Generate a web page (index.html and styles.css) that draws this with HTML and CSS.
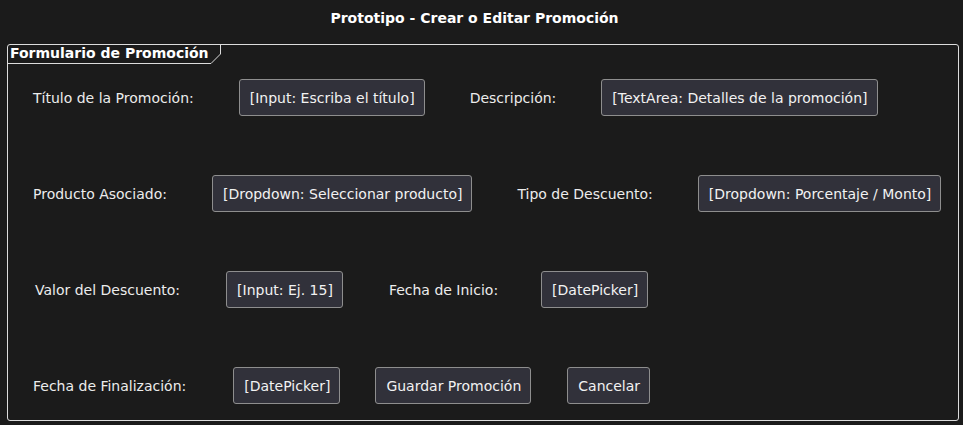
FILE: index.html
```html
<!DOCTYPE html>
<html lang="es">
<head>
<meta charset="utf-8">
<title>Prototipo - Crear o Editar Promoción</title>
<link rel="stylesheet" href="styles.css">
</head>
<body>
<div class="page">
  <h1 class="title">Prototipo - Crear o Editar Promoción</h1>
  <section class="frame">
    <div class="tab">
      <span>Formulario de Promoción</span>
      <svg class="tab-corner" viewBox="0 0 10 19" width="10" height="19"><polyline points="0,18.5 9.5,9 9.5,0" fill="none" stroke="#dcdcdc" stroke-width="1"/></svg>
    </div>
    <div class="rows">
      <div class="row">
        <span class="label">Título de la Promoción:</span>
        <span class="field">[Input: Escriba el título]</span>
        <span class="label">Descripción:</span>
        <span class="field">[TextArea: Detalles de la promoción]</span>
      </div>
      <div class="row">
        <span class="label">Producto Asociado:</span>
        <span class="field">[Dropdown: Seleccionar producto]</span>
        <span class="label">Tipo de Descuento:</span>
        <span class="field">[Dropdown: Porcentaje / Monto]</span>
      </div>
      <div class="row row-shift">
        <span class="label">Valor del Descuento:</span>
        <span class="field">[Input: Ej. 15]</span>
        <span class="label">Fecha de Inicio:</span>
        <span class="field field-tight">[DatePicker]</span>
      </div>
      <div class="row row-actions">
        <span class="label">Fecha de Finalización:</span>
        <span class="field">[DatePicker]</span>
        <div class="actions">
          <span class="field">Guardar Promoción</span>
          <span class="field">Cancelar</span>
        </div>
      </div>
    </div>
  </section>
</div>
</body>
</html>
```
FILE: styles.css
```css
html, body {
  margin: 0;
  padding: 0;
  background: #1b1b1b;
}
body {
  font-family: "DejaVu Sans", "Liberation Sans", sans-serif;
  font-size: 14px;
  color: #ececec;
  width: 963px;
  height: 425px;
  overflow: hidden;
}
.page {
  display: flex;
  flex-direction: column;
}
.title {
  margin: 0;
  padding: 9px 14px 0 0;
  height: 35px;
  line-height: 18px;
  font-size: 14px;
  font-weight: bold;
  text-align: center;
  color: #ffffff;
}
.frame {
  margin-left: 7px;
  width: 950px;
  height: 375px;
  border: 1px solid #dcdcdc;
  border-radius: 3px;
  display: flex;
  flex-direction: column;
}
.tab {
  position: relative;
  align-self: flex-start;
  height: 18px;
  line-height: 17px;
  padding: 0 12px 0 2px;
  font-weight: bold;
  color: #ffffff;
}
.tab::before {
  content: "";
  position: absolute;
  left: 0;
  right: 10px;
  bottom: -1px;
  border-bottom: 1px solid #dcdcdc;
}
.tab-corner {
  position: absolute;
  right: 0;
  top: 0;
}
.rows {
  display: flex;
  flex-direction: column;
  gap: 59px;
  padding-top: 16px;
}
.row {
  display: flex;
  align-items: center;
  gap: 45px;
  padding-left: 25px;
  height: 37px;
}
.row-shift {
  padding-left: 27px;
  gap: 46px;
}
.field-tight {
  margin-left: -3px;
}
.row-actions {
  gap: 35px;
}
.row-actions .label {
  margin-right: 12px;
}
.actions {
  display: flex;
  gap: 36px;
}
.label {
  white-space: nowrap;
}
.field {
  display: flex;
  align-items: center;
  box-sizing: border-box;
  height: 37px;
  padding: 0 9px 0 10px;
  background: #31313a;
  border: 1px solid #8e8e8e;
  border-radius: 3px;
  white-space: nowrap;
  color: #f2f2f2;
}
```
